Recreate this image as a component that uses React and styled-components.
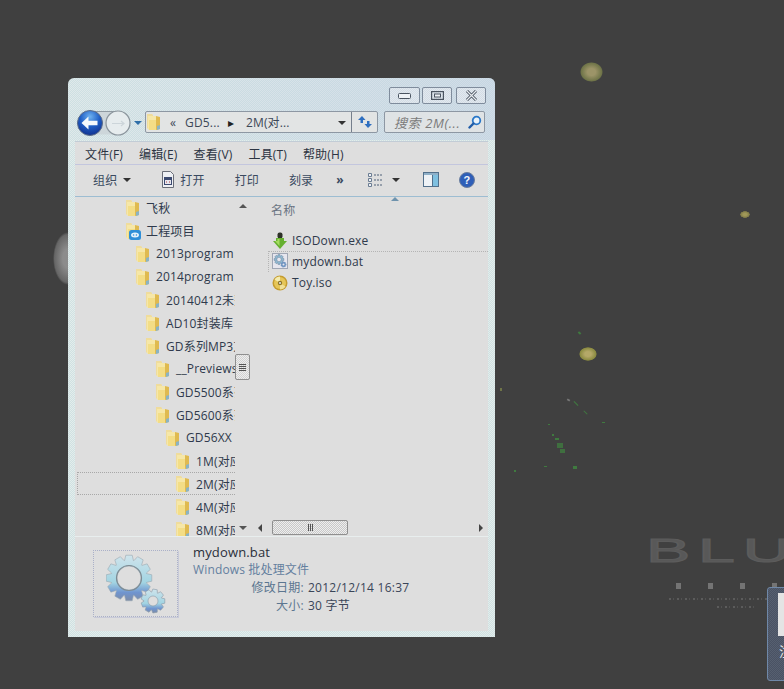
import React from "react";
import styled, { createGlobalStyle, css } from "styled-components";

const uiFont = `"Open Sans", "Noto Sans CJK SC", sans-serif`;

// the screenshot is a dithered gif, so flat areas are a 2px checker
const dither = (a, b) => css`
  background-image: conic-gradient(${a} 25%, ${b} 0 50%, ${a} 0 75%, ${b} 0);
  background-size: 2px 2px;
`;

const Global = createGlobalStyle`
  * { box-sizing: border-box; }
  html, body { margin: 0; height: 100%; background: #404040; }
  body { font-family: ${uiFont}; font-size: 12px; letter-spacing: 0.15px; color: #2a3444; }
`;

const Desktop = styled.div`
  position: relative;
  width: 784px;
  height: 689px;
  overflow: hidden;
  background: #404040;
`;

const Blob = styled.div`
  position: absolute;
  left: ${(p) => p.$x}px;
  top: ${(p) => p.$y}px;
  width: ${(p) => p.$w}px;
  height: ${(p) => p.$h}px;
  border-radius: 50%;
  background: radial-gradient(closest-side, ${(p) => p.$c || "#9c9468"} 35%, ${(p) => p.$e || "#6f7448"} 90%, transparent 100%);
`;

const Speck = styled.div`
  position: absolute;
  left: ${(p) => p.$x}px;
  top: ${(p) => p.$y}px;
  width: ${(p) => p.$w || 2}px;
  height: ${(p) => p.$h || 2}px;
  background: ${(p) => p.$c || "#3f7a3f"};
  transform: rotate(${(p) => p.$r || 0}deg);
`;

const LogoText = styled.div`
  position: absolute;
  left: 646px;
  top: 532px;
  font-family: "Liberation Sans", sans-serif;
  font-size: 34px;
  line-height: 36px;
  letter-spacing: 4px;
  white-space: nowrap;
  color: #585858;
  -webkit-text-stroke: 1px #5c5c5c;
  transform: scaleX(1.95);
  transform-origin: left center;
`;

const TinyMark = styled.div`
  position: absolute;
  left: ${(p) => p.$x}px;
  top: 583px;
  width: 5px;
  height: 6px;
  background: #747474;
`;

const FaintLine = styled.div`
  position: absolute;
  left: ${(p) => p.$x}px;
  top: ${(p) => p.$y}px;
  width: ${(p) => p.$w}px;
  height: 2px;
  background: repeating-linear-gradient(90deg, #5c5c5c 0 2px, transparent 2px 4px, #525252 4px 5px, transparent 5px 8px);
`;

const Thumbnail = styled.div`
  position: absolute;
  left: 767px;
  top: 587px;
  width: 30px;
  height: 94px;
  border: 1px solid #6f88a8;
  border-radius: 3px;
  padding: 5px 0 0 10px;
  ${dither("#4a5264", "#566070")}
`;

const ThumbSheet = styled.div`
  width: 20px;
  height: 43px;
  background: #e4e4e4;
`;

const ThumbLabel = styled.div`
  margin: 7px 0 0 1px;
  font-size: 13px;
  line-height: 16px;
  color: #f0f0f0;
  white-space: nowrap;
`;

const Window = styled.div`
  position: absolute;
  left: 68px;
  top: 78px;
  width: 427px;
  height: 559px;
  display: flex;
  flex-direction: column;
  padding: 0 7px 6px;
  border-radius: 6px 6px 0 0;
  ${dither("#cfe2e2", "#e4ecec")}
  &::before {
    content: "";
    position: absolute;
    inset: 0 0 auto 0;
    height: 62px;
    border-radius: 6px 6px 0 0;
    background: linear-gradient(90deg, rgba(190, 205, 225, 0.1), rgba(185, 200, 225, 0.45));
    pointer-events: none;
  }
`;

const TitleBar = styled.div`
  position: relative;
  display: flex;
  justify-content: flex-end;
  padding: 9px 2px 0 0;
  height: 33px;
`;

const CaptionButton = styled.div`
  width: ${(p) => p.$w || 30}px;
  height: 17px;
  margin-left: ${(p) => p.$ml || 0}px;
  display: flex;
  align-items: center;
  justify-content: center;
  border: 1px solid #7f8c9c;
  border-radius: 2px;
  ${dither("#d3dde6", "#e2e8ee")}
`;

const NavRow = styled.div`
  position: relative;
  display: flex;
  align-items: center;
  height: 22px;
  margin-bottom: 8px;
  padding-left: 2px;
`;

const AddressBox = styled.div`
  width: 233px;
  height: 22px;
  margin-left: 3px;
  display: flex;
  align-items: center;
  border: 1px solid #8d97a3;
  border-radius: 2px;
  background: #e2e4e4;
  color: #3d4858;
`;

const AddressPart = styled.span`
  margin-left: ${(p) => p.$ml}px;
  white-space: nowrap;
  color: ${(p) => p.$c || "inherit"};
`;

const RefreshBox = styled.div`
  width: 26px;
  height: 20px;
  display: flex;
  align-items: center;
  justify-content: center;
  border-left: 1px solid #757f8c;
`;

const SearchBox = styled.div`
  width: 101px;
  height: 22px;
  margin-left: 6px;
  padding: 0 2px 0 9px;
  display: flex;
  align-items: center;
  justify-content: space-between;
  border: 1px solid #8d97a3;
  border-radius: 2px;
  background: #dfe3e5;
  color: #7a7a7a;
  font-size: 13px;
  letter-spacing: 0.6px;
  font-style: italic;
  white-space: nowrap;
`;

const Panel = styled.div`
  flex: 1;
  min-height: 0;
  display: flex;
  flex-direction: column;
  background: #dedede;
`;

const MenuBar = styled.div`
  height: 23px;
  display: flex;
  align-items: center;
  gap: 16px;
  padding: 2px 0 0 10px;
  border-top: 1px solid #c2ccd6;
`;

const MenuItem = styled.span`
  white-space: nowrap;
  color: #2c3442;
`;

const Toolbar = styled.div`
  height: 33px;
  display: flex;
  align-items: center;
  padding-bottom: 2px;
  border-top: 1px solid #c3c6de;
  border-bottom: 1px solid #9dbdd2;
  color: #3a4a60;
`;

const ToolItem = styled.div`
  margin-left: ${(p) => p.$ml}px;
  display: flex;
  align-items: center;
  gap: ${(p) => p.$gap || 0}px;
  white-space: nowrap;
`;

const Body = styled.div`
  position: relative;
  height: 340px;
  display: flex;
  border-bottom: 1px solid #e8eeee;
`;

const TreePane = styled.div`
  width: 176px;
  display: flex;
`;

const TreeList = styled.div`
  width: 160px;
  height: 339px;
  padding-bottom: 1px;
  overflow: hidden;
`;

const TreeRow = styled.div`
  height: 23px;
  margin-top: ${(p) => (p.$first ? -1 : 0)}px;
  display: flex;
  align-items: center;
  gap: 5px;
  padding-left: ${(p) => 50 + p.$level * 10}px;
  white-space: nowrap;
  overflow: hidden;
  color: #2f3a4c;
  ${(p) =>
    p.$focus &&
    css`
      border-top: 1px dotted #a8a8a8;
      border-left: 1px dotted #a8a8a8;
      border-bottom: 1px dotted #a8a8a8;
      margin-left: 2px;
      padding-left: ${47 + p.$level * 10}px;
    `}
`;

const VScroll = styled.div`
  width: 16px;
  display: flex;
  flex-direction: column;
  align-items: center;
`;

const ArrowUp = styled.div`
  width: 0;
  height: 0;
  margin-top: ${(p) => p.$mt || 0}px;
  border: 4px solid transparent;
  border-top: 0;
  border-bottom: 4px solid #555;
`;

const ArrowDown = styled.div`
  width: 0;
  height: 0;
  margin-top: ${(p) => p.$mt || 0}px;
  margin-left: ${(p) => p.$ml || 0}px;
  margin-right: ${(p) => p.$mr || 0}px;
  border: 4px solid transparent;
  border-bottom: 0;
  border-top: 4px solid ${(p) => p.$c || "#555"};
`;

const VThumb = styled.div`
  width: 15px;
  height: 26px;
  margin-top: 146px;
  align-self: flex-start;
  display: flex;
  flex-direction: column;
  align-items: center;
  justify-content: center;
  gap: 1px;
  border: 1px solid #8f8f8f;
  border-radius: 2px;
  ${dither("#d2d2d2", "#eeeeee")}
`;

const GripLine = styled.i`
  width: 7px;
  height: 1px;
  background: #555;
`;

const FilePane = styled.div`
  position: relative;
  flex: 1;
  display: flex;
  flex-direction: column;
`;

const ColumnHeader = styled.div`
  height: 33px;
  padding: 4px 0 0 20px;
  color: #6a7482;
`;

const SortCaret = styled.div`
  position: absolute;
  left: 140px;
  top: 0;
  width: 0;
  height: 0;
  border: 4px solid transparent;
  border-top: 0;
  border-bottom: 4px solid #6f93ad;
`;

const FileRow = styled.div`
  height: 21px;
  display: flex;
  align-items: center;
  gap: 4px;
  padding-left: 21px;
  color: #2f3a4c;
  ${(p) =>
    p.$focus &&
    css`
      margin-left: 17px;
      padding: 0 0 2px 3px;
      border-top: 1px dotted #b4b4b4;
      border-left: 1px dotted #b4b4b4;
    `}
`;

const HScroll = styled.div`
  margin-top: auto;
  margin-bottom: 1px;
  height: 15px;
  display: flex;
  align-items: center;
  padding: 0 5px 0 7px;
`;

const ArrowLeft = styled.div`
  width: 0;
  height: 0;
  border: 4px solid transparent;
  border-left: 0;
  border-right: 4px solid #444;
`;

const ArrowRight = styled.div`
  width: 0;
  height: 0;
  margin-left: auto;
  border: 4px solid transparent;
  border-right: 0;
  border-left: 4px solid #444;
`;

const HThumb = styled.div`
  width: 76px;
  height: 15px;
  margin-left: 10px;
  display: flex;
  align-items: center;
  justify-content: center;
  gap: 1px;
  border: 1px solid #8f8f8f;
  border-radius: 2px;
  ${dither("#c8c8c8", "#eeeeee")}
`;

const GripBar = styled.i`
  width: 1px;
  height: 7px;
  background: #555;
`;

const Details = styled.div`
  flex: 1;
  display: flex;
  padding: 13px 0 0 18px;
`;

const PreviewFrame = styled.div`
  width: 85px;
  height: 67px;
  display: flex;
  align-items: center;
  justify-content: center;
  border: 1px dotted #aab0c8;
  box-shadow: 1px 1px 0 #c8cad8;
`;

const Meta = styled.div`
  margin: -6px 0 0 15px;
`;

const MetaName = styled.div`
  font-size: 13px;
  line-height: 17px;
  color: #2a2f3a;
`;

const MetaType = styled.div`
  line-height: 17px;
  color: #64809f;
`;

const MetaGrid = styled.div`
  display: grid;
  grid-template-columns: 111px auto;
  column-gap: 4px;
  row-gap: 1px;
  margin-top: 1px;
  line-height: 17px;
  letter-spacing: 0.25px;
`;

const MetaKey = styled.span`
  text-align: right;
  color: #5c7690;
`;

const MetaValue = styled.span`
  color: #3a4558;
`;

function Folder({ badge }) {
  return (
    <svg width="16" height="18" viewBox="0 0 16 18" style={{ flex: "none" }}>
      <path d="M1 1h5l1 1v14H2l-1-1z" fill="#efdc9c" />
      <path d="M2 3h8l1 1v13H3l-1-1z" fill="#f6e7a8" />
      <path d="M10 3l4 1v12l-4 1z" fill="#dfba50" />
      <path d="M3 7h7v10H3z" fill="#f2d878" opacity="0.7" />
      <path d="M11 13l3-1v4l-3 1z" fill="#8ab4c4" />
      {badge && (
        <g>
          <rect x="4" y="8" width="12" height="10" rx="2.5" fill="#2f8fd8" />
          <ellipse cx="10" cy="13" rx="4" ry="2.5" fill="#e4f2fb" />
          <circle cx="8.6" cy="13" r="0.8" fill="#2f8fd8" />
          <circle cx="11.4" cy="13" r="0.8" fill="#2f8fd8" />
        </g>
      )}
    </svg>
  );
}

// builds a cog outline, hole is cut with evenodd
function cogPath(cx, cy, outer, root, hole, teeth) {
  const pts = [];
  const step = (Math.PI * 2) / teeth;
  for (let i = 0; i < teeth; i++) {
    const a = i * step;
    [[-0.5, root], [-0.28, outer], [0.28, outer], [0.5, root]].forEach(([k, r]) => {
      const t = a + k * step * 0.95;
      pts.push(`${(cx + Math.cos(t) * r).toFixed(2)} ${(cy + Math.sin(t) * r).toFixed(2)}`);
    });
  }
  const ring = `M${cx - hole} ${cy}a${hole} ${hole} 0 1 0 ${hole * 2} 0a${hole} ${hole} 0 1 0 ${-hole * 2} 0z`;
  return `M${pts.join("L")}z${ring}`;
}

function Gears() {
  return (
    <svg width="60" height="60" viewBox="0 0 60 60">
      <defs>
        <linearGradient id="cog" x1="0" y1="0" x2="0" y2="1">
          <stop offset="0" stopColor="#cfe4ec" />
          <stop offset="0.6" stopColor="#a2d4e2" />
          <stop offset="0.82" stopColor="#6f94cf" />
          <stop offset="1" stopColor="#7d8ca8" />
        </linearGradient>
      </defs>
      <path d={cogPath(23, 24, 23, 18, 12, 12)} fill="url(#cog)" fillRule="evenodd" stroke="#9aa8b0" strokeWidth="0.6" />
      <circle cx="23" cy="24" r="12.5" fill="none" stroke="#7d8a92" strokeWidth="1.2" />
      <path d={cogPath(47, 47, 12, 9, 5, 9)} fill="url(#cog)" fillRule="evenodd" stroke="#8a98a6" strokeWidth="0.6" />
    </svg>
  );
}

function SmallBatIcon() {
  return (
    <svg width="16" height="16" viewBox="0 0 16 16" style={{ flex: "none" }}>
      <rect x="0.5" y="0.5" width="15" height="15" fill="#e6e6ee" stroke="#5f6a82" strokeDasharray="1 1" />
      <path d={cogPath(7, 6.5, 5, 3.6, 2.2, 8)} fill="#8fb8d0" fillRule="evenodd" stroke="#58708a" strokeWidth="0.4" />
      <path d={cogPath(11.5, 11.5, 3, 2.2, 1, 7)} fill="#6f94c0" fillRule="evenodd" />
    </svg>
  );
}

function ExeIcon() {
  return (
    <svg width="16" height="18" viewBox="0 0 16 18" style={{ flex: "none" }}>
      <rect x="5.5" y="0.5" width="5" height="6" rx="2" fill="#2e3228" />
      <path d="M4 6h8v3h3l-7 8-7-8h3z" fill="#66b030" />
      <path d="M5.5 7h2v7L3 9h2.5z" fill="#a4dc60" />
    </svg>
  );
}

function DiscIcon() {
  return (
    <svg width="16" height="16" viewBox="0 0 16 16" style={{ flex: "none" }}>
      <circle cx="8" cy="8" r="7.5" fill="#c49c30" />
      <circle cx="8" cy="8" r="6" fill="#e6c658" />
      <path d="M8 8L2.500 4.500A6.500 6.500 0 0 1 8 1.500z" fill="#f4ecb0" />
      <path d="M8 8l5.500 3.500A6.500 6.500 0 0 1 8 14.500z" fill="#f0e098" />
      <circle cx="8" cy="8" r="2.200" fill="#8c7428" />
      <circle cx="8" cy="8" r="1.100" fill="#dedede" />
    </svg>
  );
}

// back and forward share one glass bridge
function NavButtons() {
  return (
    <svg width="54" height="26" viewBox="0 0 54 26" style={{ flex: "none", marginTop: 2 }}>
      <defs>
        <radialGradient id="back" cx="0.5" cy="0.25" r="0.8">
          <stop offset="0" stopColor="#6fb2f0" />
          <stop offset="0.5" stopColor="#1e5cc4" />
          <stop offset="1" stopColor="#102c88" />
        </radialGradient>
      </defs>
      <path d="M13 1.500h27v23H13z" fill="#cdd6da" />
      <path d="M13 1.500h27" stroke="#8f9aa2" />
      <circle cx="41" cy="13" r="12" fill="#e6ecee" stroke="#8a949c" strokeWidth="1.200" />
      <path d="M35 13.500h12M44 11l3 2.500-3 2.500" fill="none" stroke="#ccd5da" strokeWidth="1.200" />
      <circle cx="13" cy="13" r="12.500" fill="url(#back)" stroke="#5c6c88" />
      <path d="M4.500 13l7-6.500v4.200h9v4.600h-9v4.200z" fill="#f4f8fc" />
    </svg>
  );
}

function RefreshIcon() {
  return (
    <svg width="16" height="14" viewBox="0 0 16 14">
      <path d="M5 1L1 5h2.500v3H6V5h2.500z" fill="#2f6fc0" />
      <path d="M11 13l4-4h-2.500V6H10v3H7.500z" fill="#2f6fc0" />
    </svg>
  );
}

function SearchIcon() {
  return (
    <svg width="14" height="14" viewBox="0 0 14 14" style={{ flex: "none" }}>
      <circle cx="8.500" cy="5.500" r="3.800" fill="#e8f2fa" stroke="#2a78c8" strokeWidth="1.800" />
      <path d="M5.500 8.500L1.500 12.500" stroke="#1f5ca8" strokeWidth="2.400" strokeLinecap="round" />
    </svg>
  );
}

function OpenIcon() {
  return (
    <svg width="16" height="17" viewBox="0 0 16 17">
      <path d="M2.500.5h8l3 3v13h-11z" fill="#eef0f4" stroke="#6a6e78" />
      <rect x="4" y="6" width="8" height="8" fill="#3c4a70" />
      <rect x="5" y="9" width="6" height="4" fill="#e8e8f0" />
      <path d="M6 11h1M9 11h1" stroke="#b04040" />
    </svg>
  );
}

function ViewsIcon() {
  return (
    <svg width="16" height="14" viewBox="0 0 16 14">
      <path d="M.5.500h3v3h-3zM.5 5.500h3v3h-3zM.5 10.500h3v3h-3z" fill="#eef0f4" stroke="#6a7c92" />
      <path d="M6 2h9M6 7h9M6 12h9" stroke="#4f6078" strokeDasharray="2 1" />
    </svg>
  );
}

function PaneIcon() {
  return (
    <svg width="16" height="15" viewBox="0 0 16 15">
      <rect x="0.500" y="0.500" width="15" height="14" fill="#eef2f6" stroke="#52708c" />
      <rect x="1" y="1" width="14" height="2" fill="#8fb0c8" />
      <rect x="10" y="3" width="5" height="11" fill="#7fc0e0" />
      <path d="M9.500 3v11" stroke="#52708c" />
    </svg>
  );
}

function HelpIcon() {
  return (
    <svg width="16" height="16" viewBox="0 0 16 16">
      <circle cx="8" cy="8" r="7.500" fill="#2f5fb8" stroke="#6c7e9e" />
      <text x="8" y="12" textAnchor="middle" fontSize="11" fontWeight="700" fontFamily="Liberation Sans, sans-serif" fill="#f2f6fc">?</text>
    </svg>
  );
}

const treeItems = [
  { level: 0, label: "飞秋" },
  { level: 0, label: "工程项目", badge: true },
  { level: 1, label: "2013program" },
  { level: 1, label: "2014program" },
  { level: 2, label: "20140412未整理" },
  { level: 2, label: "AD10封装库" },
  { level: 2, label: "GD系列MP3方案" },
  { level: 3, label: "__Previews" },
  { level: 3, label: "GD5500系列" },
  { level: 3, label: "GD5600系列" },
  { level: 4, label: "GD56XX" },
  { level: 5, label: "1M(对应" },
  { level: 5, label: "2M(对应", focus: true },
  { level: 5, label: "4M(对应" },
  { level: 5, label: "8M(对应" },
];

const specks = [
  [578, 332, 3, 2, "#3f7a3f", 40],
  [567, 399, 3, 2, "#777", 30],
  [573, 403, 6, 1, "#3f7a3f", 45],
  [583, 412, 5, 1, "#3f7a3f", 45],
  [548, 424, 2, 1],
  [552, 434, 2, 2],
  [555, 438, 4, 2],
  [557, 443, 6, 5, "#3f6f3f"],
  [560, 449, 5, 4, "#3f6f3f"],
  [544, 466, 3, 1],
  [514, 470, 2, 2],
  [573, 466, 4, 3],
  [602, 422, 3, 1],
  [500, 388, 2, 3, "#6f7448"],
];

export default function App() {
  return (
    <Desktop>
      <Global />
      <Blob $x={580} $y={62} $w={23} $h={20} />
      <Blob $x={740} $y={211} $w={10} $h={7} $c="#a09858" $e="#7f7a48" />
      <Blob $x={579} $y={347} $w={18} $h={14} $c="#b4a868" $e="#8a8a40" />
      <Blob $x={53} $y={232} $w={30} $h={53} $c="#8c8c8c" $e="#666" />
      {specks.map(([x, y, w, h, c, r], i) => (
        <Speck key={i} $x={x} $y={y} $w={w} $h={h} $c={c} $r={r} />
      ))}
      <LogoText>BLU</LogoText>
      <TinyMark $x={676} />
      <TinyMark $x={708} />
      <TinyMark $x={740} />
      <TinyMark $x={772} />
      <FaintLine $x={669} $y={598} $w={100} />
      <FaintLine $x={717} $y={606} $w={38} />
      <Thumbnail>
        <ThumbSheet />
        <ThumbLabel>注册</ThumbLabel>
      </Thumbnail>

      <Window>
        <TitleBar>
          <CaptionButton $w={31}>
            <svg width="13" height="6" viewBox="0 0 13 6"><rect x="0.500" y="0.500" width="12" height="5" rx="1" fill="#eef2f6" stroke="#4a5460" /></svg>
          </CaptionButton>
          <CaptionButton $ml={2}>
            <svg width="13" height="9" viewBox="0 0 13 9"><rect x="0.500" y="0.500" width="12" height="8" fill="none" stroke="#4a5460" strokeWidth="1.400" /><rect x="3.500" y="3" width="6" height="3" fill="#eef2f6" stroke="#4a5460" /></svg>
          </CaptionButton>
          <CaptionButton $ml={4}>
            <svg width="13" height="11" viewBox="0 0 13 11"><path d="M2 1l9 9M11 1l-9 9" stroke="#4a5460" strokeWidth="3" /><path d="M2 1l9 9M11 1l-9 9" stroke="#e8ecf0" strokeWidth="1.200" /></svg>
          </CaptionButton>
        </TitleBar>

        <NavRow>
          <NavButtons />
          <ArrowDown $c="#2f6fa8" $ml={3} $mt={2} />
          <AddressBox>
            <Folder />
            <AddressPart $ml={8}>«</AddressPart>
            <AddressPart $ml={9}>GD5...</AddressPart>
            <AddressPart $ml={8} $c="#222">▸</AddressPart>
            <AddressPart $ml={12}>2M(对...</AddressPart>
            <ArrowDown $c="#333" $mt={1} style={{ marginLeft: "auto", marginRight: 5 }} />
            <RefreshBox>
              <RefreshIcon />
            </RefreshBox>
          </AddressBox>
          <SearchBox>
            <span>搜索 2M(...</span>
            <SearchIcon />
          </SearchBox>
        </NavRow>

        <Panel>
          <MenuBar>
            <MenuItem>文件(F)</MenuItem>
            <MenuItem>编辑(E)</MenuItem>
            <MenuItem>查看(V)</MenuItem>
            <MenuItem>工具(T)</MenuItem>
            <MenuItem>帮助(H)</MenuItem>
          </MenuBar>

          <Toolbar>
            <ToolItem $ml={18} $gap={6}>组织<ArrowDown $c="#333" $mt={1} /></ToolItem>
            <ToolItem $ml={29} $gap={4}><OpenIcon />打开</ToolItem>
            <ToolItem $ml={30}>打印</ToolItem>
            <ToolItem $ml={30}>刻录</ToolItem>
            <ToolItem $ml={23}><b>»</b></ToolItem>
            <ToolItem $ml={24} $gap={8}><ViewsIcon /><ArrowDown $c="#333" $mt={1} /></ToolItem>
            <ToolItem $ml={23}><PaneIcon /></ToolItem>
            <ToolItem $ml={20}><HelpIcon /></ToolItem>
          </Toolbar>

          <Body>
            <TreePane>
              <TreeList>
                {treeItems.map((t, i) => (
                  <TreeRow key={t.label} $level={t.level} $focus={t.focus} $first={i === 0}>
                    <Folder badge={t.badge} />
                    <span>{t.label}</span>
                  </TreeRow>
                ))}
              </TreeList>
              <VScroll>
                <ArrowUp $mt={7} />
                <VThumb>
                  <GripLine />
                  <GripLine />
                  <GripLine />
                  <GripLine />
                </VThumb>
                <ArrowDown $mt={146} />
              </VScroll>
            </TreePane>
            <FilePane>
              <SortCaret />
              <ColumnHeader>名称</ColumnHeader>
              <FileRow><ExeIcon />ISODown.exe</FileRow>
              <FileRow $focus><SmallBatIcon />mydown.bat</FileRow>
              <FileRow><DiscIcon />Toy.iso</FileRow>
              <HScroll>
                <ArrowLeft />
                <HThumb>
                  <GripBar />
                  <GripBar />
                  <GripBar />
                </HThumb>
                <ArrowRight />
              </HScroll>
            </FilePane>
          </Body>

          <Details>
            <PreviewFrame>
              <Gears />
            </PreviewFrame>
            <Meta>
              <MetaName>mydown.bat</MetaName>
              <MetaType>Windows 批处理文件</MetaType>
              <MetaGrid>
                <MetaKey>修改日期:</MetaKey>
                <MetaValue>2012/12/14 16:37</MetaValue>
                <MetaKey>大小:</MetaKey>
                <MetaValue>30 字节</MetaValue>
              </MetaGrid>
            </Meta>
          </Details>
        </Panel>
      </Window>
    </Desktop>
  );
}
